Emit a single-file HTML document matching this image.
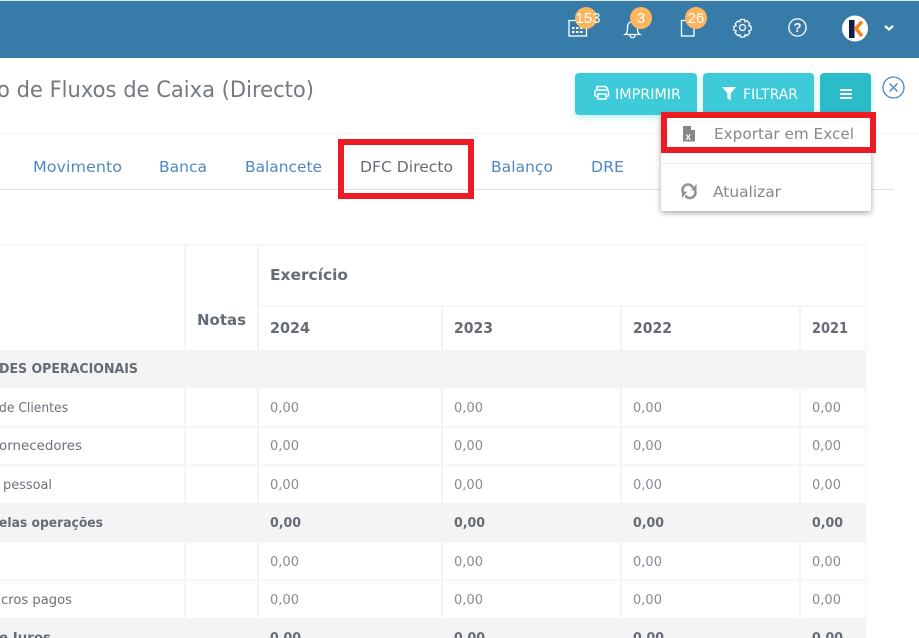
<!DOCTYPE html>
<html lang="pt"><head><meta charset="utf-8"><title>DFC Directo</title>
<style>
html,body{margin:0;padding:0;width:919px;height:638px;overflow:hidden;background:#fff}
svg{display:block}
text{font-family:"DejaVu Sans","Liberation Sans",sans-serif}
.c{font-size:13px;fill:#878b94}
.l{font-size:13px;fill:#6c7078}
.b{font-size:13px;font-weight:700;fill:#666c75}
.h{font-size:15px;font-weight:700;fill:#666c75}
.t{font-size:15px;fill:#5088c4}
.n{font-family:"Liberation Sans",sans-serif;font-size:15px;fill:#fff}
</style></head><body>
<svg width="919" height="638" viewBox="0 0 919 638" xmlns="http://www.w3.org/2000/svg">
<defs>
<filter id="s1" x="-20%" y="-20%" width="140%" height="150%"><feDropShadow dx="0" dy="2" stdDeviation="3" flood-color="#000" flood-opacity=".35"/></filter>
<filter id="s2" x="-20%" y="-20%" width="140%" height="150%"><feDropShadow dx="0" dy="3" stdDeviation="3" flood-color="#3cc9d8" flood-opacity=".3"/></filter>
<filter id="s3" x="-20%" y="-50%" width="140%" height="200%"><feGaussianBlur stdDeviation="3"/></filter>
</defs>

<!-- top bar -->
<rect width="919" height="58" fill="#377ca8"/>
<rect width="919" height="1" fill="#dfe7ec"/>

<!-- header band -->
<rect x="0" y="128" width="919" height="5" fill="#000" opacity=".05" filter="url(#s3)"/>
<rect x="0" y="58" width="919" height="74" fill="#fff"/>
<text x="-3" y="97" font-size="22" fill="#747a82" textLength="317" lengthAdjust="spacingAndGlyphs">o de Fluxos de Caixa (Directo)</text>

<!-- top icons -->
<g fill="none" stroke="#fff" stroke-width="1.300">
<rect x="569" y="20.500" width="17.500" height="15.500"/>
<path d="M625 34.500c2.500-1.500 2.500-3.500 2.500-7.500 0-3 2-5.500 5-5.500s5 2.500 5 5.500c0 4 0 6 2.500 7.500zM630 35c0 3.500 5 3.500 5 0"/>
<rect x="681.500" y="20.500" width="12.500" height="15.500"/>
<circle cx="742.500" cy="27.500" r="3"/>
<path d="M740.500 19.500h4l.6 2.300 2-.9 2.700 2.800-1 2 2.300.7v3.800l-2.300.7 1 2-2.700 2.800-2-1-.6 2.300h-4l-.6-2.300-2 1-2.700-2.800 1-2-2.300-.7v-3.800l2.300-.7-1-2 2.700-2.800 2 .9z"/>
<circle cx="797.500" cy="27.500" r="8.600"/>
</g>
<g fill="#fff"><rect x="572" y="27" width="2.500" height="2"/><rect x="576" y="27" width="2.500" height="2"/><rect x="580" y="27" width="2.500" height="2"/><rect x="572" y="31" width="2.500" height="2"/><rect x="576" y="31" width="2.500" height="2"/><rect x="580" y="31" width="2.500" height="2"/></g>
<text x="797.500" y="32" font-size="13" font-weight="700" fill="#fff" text-anchor="middle" style="font-family:'Liberation Sans',sans-serif">?</text>

<circle cx="586" cy="18" r="11" fill="#fdb55e"/>
<circle cx="641" cy="18" r="11" fill="#fdb55e"/>
<circle cx="696" cy="18" r="11" fill="#fdb55e"/>
<text class="n" x="575.500" y="23" textLength="25" lengthAdjust="spacingAndGlyphs">153</text>
<text class="n" x="641" y="23" text-anchor="middle">3</text>
<text class="n" x="696" y="23" text-anchor="middle">26</text>

<!-- avatar -->
<circle cx="855" cy="28.500" r="13" fill="#fff"/>
<rect x="849" y="20" width="5.500" height="18" fill="#0e1a47"/>
<path d="M862 21.500l-6 7 6 7.500" fill="none" stroke="#f5841f" stroke-width="3.600"/>
<path d="M885 26l4 3.500 4-3.500" fill="none" stroke="#fff" stroke-width="2.300"/>

<!-- buttons -->
<rect x="575" y="73" width="122" height="42" rx="4" fill="#3ccad9" filter="url(#s2)"/>
<rect x="703" y="73" width="111" height="42" rx="4" fill="#3ccad9" filter="url(#s2)"/>
<rect x="820" y="73" width="51" height="42" rx="4" fill="#29bcc9" filter="url(#s2)"/>
<g fill="none" stroke="#fff" stroke-width="1.500">
<path d="M597 90v-3.500h8.500l2 2v1.500"/>
<rect x="595" y="90" width="13.500" height="6.500" rx="1.500"/>
<rect x="598" y="94" width="8" height="5" fill="#3ccad9"/>
</g>
<path d="M722 87h14l-5.200 6.200v7.300l-3.400-2v-5.300z" fill="#fff"/>
<g fill="#fff"><rect x="840" y="89" width="12" height="2"/><rect x="840" y="93" width="12" height="2"/><rect x="840" y="97" width="12" height="2"/></g>
<text x="615" y="99" font-size="14" fill="#fff" textLength="66" lengthAdjust="spacingAndGlyphs">IMPRIMIR</text>
<text x="743" y="99" font-size="14" fill="#fff" textLength="55" lengthAdjust="spacingAndGlyphs">FILTRAR</text>
<circle cx="893.500" cy="87.500" r="10.500" fill="none" stroke="#4a86c5" stroke-width="1.300"/>
<path d="M889.500 83.500l8 8m0-8l-8 8" stroke="#4a86c5" stroke-width="1.300"/>

<!-- tabs -->
<rect x="0" y="189" width="894" height="1" fill="#dcdee0"/>
<text class="t" x="33" y="172" textLength="89" lengthAdjust="spacingAndGlyphs">Movimento</text>
<text class="t" x="159" y="172" textLength="48" lengthAdjust="spacingAndGlyphs">Banca</text>
<text class="t" x="245" y="172" textLength="77" lengthAdjust="spacingAndGlyphs">Balancete</text>
<text x="360" y="172" font-size="15" fill="#666c75" textLength="93" lengthAdjust="spacingAndGlyphs">DFC Directo</text>
<text class="t" x="491" y="172" textLength="62" lengthAdjust="spacingAndGlyphs">Balanço</text>
<text class="t" x="591" y="172" textLength="33" lengthAdjust="spacingAndGlyphs">DRE</text>

<!-- table grid -->
<g fill="#f4f4f4">
<rect x="0" y="244" width="866" height="1.500"/>
<rect x="258" y="305" width="607" height="1.500"/>
<rect x="0" y="350" width="866" height="38.500"/>
<rect x="0" y="426" width="866" height="1.800"/>
<rect x="0" y="464.500" width="866" height="1.800"/>
<rect x="0" y="503" width="866" height="39.500"/>
<rect x="0" y="579.500" width="866" height="1.800"/>
<rect x="0" y="618" width="866" height="20"/>
<rect x="184" y="245" width="2" height="393"/>
<rect x="257" y="245" width="2" height="393"/>
<rect x="441" y="306" width="2" height="332"/>
<rect x="620" y="306" width="2" height="332"/>
<rect x="799" y="306" width="2" height="332"/>
<rect x="865" y="245" width="1.500" height="393"/>
</g>

<!-- headers -->
<text class="h" x="197" y="325" textLength="49" lengthAdjust="spacingAndGlyphs">Notas</text>
<text class="h" x="270" y="280" textLength="78" lengthAdjust="spacingAndGlyphs">Exercício</text>
<text class="h" x="270" y="333" textLength="40" lengthAdjust="spacingAndGlyphs">2024</text>
<text class="h" x="454" y="333" textLength="39" lengthAdjust="spacingAndGlyphs">2023</text>
<text class="h" x="633" y="333" textLength="39" lengthAdjust="spacingAndGlyphs">2022</text>
<text class="h" x="812" y="333" textLength="36" lengthAdjust="spacingAndGlyphs">2021</text>

<!-- row labels -->
<text class="b" x="-1" y="373" textLength="139" lengthAdjust="spacingAndGlyphs">DES OPERACIONAIS</text>
<text class="l" x="-1" y="412" textLength="69" lengthAdjust="spacingAndGlyphs">de Clientes</text>
<text class="l" x="-1" y="450" textLength="83" lengthAdjust="spacingAndGlyphs">ornecedores</text>
<text class="l" x="3" y="489" textLength="49" lengthAdjust="spacingAndGlyphs">pessoal</text>
<text class="b" x="-1" y="527" textLength="104" lengthAdjust="spacingAndGlyphs">elas operações</text>
<text class="l" x="1" y="604" textLength="71" lengthAdjust="spacingAndGlyphs">cros pagos</text>
<text class="b" x="-1" y="642" textLength="52" lengthAdjust="spacingAndGlyphs">e Juros</text>

<!-- values -->
<text class="c" x="270" y="412" textLength="29" lengthAdjust="spacingAndGlyphs">0,00</text><text class="c" x="454" y="412" textLength="29" lengthAdjust="spacingAndGlyphs">0,00</text><text class="c" x="633" y="412" textLength="29" lengthAdjust="spacingAndGlyphs">0,00</text><text class="c" x="812" y="412" textLength="29" lengthAdjust="spacingAndGlyphs">0,00</text>
<text class="c" x="270" y="450" textLength="29" lengthAdjust="spacingAndGlyphs">0,00</text><text class="c" x="454" y="450" textLength="29" lengthAdjust="spacingAndGlyphs">0,00</text><text class="c" x="633" y="450" textLength="29" lengthAdjust="spacingAndGlyphs">0,00</text><text class="c" x="812" y="450" textLength="29" lengthAdjust="spacingAndGlyphs">0,00</text>
<text class="c" x="270" y="489" textLength="29" lengthAdjust="spacingAndGlyphs">0,00</text><text class="c" x="454" y="489" textLength="29" lengthAdjust="spacingAndGlyphs">0,00</text><text class="c" x="633" y="489" textLength="29" lengthAdjust="spacingAndGlyphs">0,00</text><text class="c" x="812" y="489" textLength="29" lengthAdjust="spacingAndGlyphs">0,00</text>
<text class="b" x="270" y="527" textLength="31" lengthAdjust="spacingAndGlyphs">0,00</text><text class="b" x="454" y="527" textLength="31" lengthAdjust="spacingAndGlyphs">0,00</text><text class="b" x="633" y="527" textLength="31" lengthAdjust="spacingAndGlyphs">0,00</text><text class="b" x="812" y="527" textLength="31" lengthAdjust="spacingAndGlyphs">0,00</text>
<text class="c" x="270" y="566" textLength="29" lengthAdjust="spacingAndGlyphs">0,00</text><text class="c" x="454" y="566" textLength="29" lengthAdjust="spacingAndGlyphs">0,00</text><text class="c" x="633" y="566" textLength="29" lengthAdjust="spacingAndGlyphs">0,00</text><text class="c" x="812" y="566" textLength="29" lengthAdjust="spacingAndGlyphs">0,00</text>
<text class="c" x="270" y="604" textLength="29" lengthAdjust="spacingAndGlyphs">0,00</text><text class="c" x="454" y="604" textLength="29" lengthAdjust="spacingAndGlyphs">0,00</text><text class="c" x="633" y="604" textLength="29" lengthAdjust="spacingAndGlyphs">0,00</text><text class="c" x="812" y="604" textLength="29" lengthAdjust="spacingAndGlyphs">0,00</text>
<text class="b" x="270" y="642" textLength="31" lengthAdjust="spacingAndGlyphs">0,00</text><text class="b" x="454" y="642" textLength="31" lengthAdjust="spacingAndGlyphs">0,00</text><text class="b" x="633" y="642" textLength="31" lengthAdjust="spacingAndGlyphs">0,00</text><text class="b" x="812" y="642" textLength="31" lengthAdjust="spacingAndGlyphs">0,00</text>

<!-- dropdown -->
<rect x="661" y="113" width="210" height="98" rx="2" fill="#fff" filter="url(#s1)"/>
<rect x="661" y="163" width="210" height="1" fill="#eeeeee"/>
<path d="M683 126h8l4 4v11.500h-12z" fill="#85878a"/>
<path d="M691 126v4h4z" fill="#fff"/>
<text x="685.500" y="140" font-size="10" font-weight="700" fill="#fff" style="font-family:'Liberation Sans',sans-serif">x</text>
<text x="714" y="139" font-size="15" fill="#85888d" textLength="140" lengthAdjust="spacingAndGlyphs">Exportar em Excel</text>
<g fill="none" stroke="#909296" stroke-width="2.600">
<path d="M693 188c-1-3-3-3.500-5-3.500-3 0-5.500 2.500-5.500 5.500 0 1 .3 2 .8 3"/>
<path d="M685.500 195.500c1 2 3 2.500 4.500 2.500 3 0 5.500-2.500 5.500-5.500 0-1-.3-2-.8-3"/>
</g>
<path d="M691 190.500l5.500-.5v-6zM687.500 191.500l-5.500 .5v6z" fill="#909296"/>
<text x="713" y="197" font-size="15" fill="#85888d" textLength="68" lengthAdjust="spacingAndGlyphs">Atualizar</text>

<!-- red highlights -->
<rect x="341" y="142" width="130" height="54" fill="none" stroke="#ed1c24" stroke-width="6"/>
<rect x="664" y="115" width="209" height="35" fill="none" stroke="#ed1c24" stroke-width="6"/>
</svg>
</body></html>
